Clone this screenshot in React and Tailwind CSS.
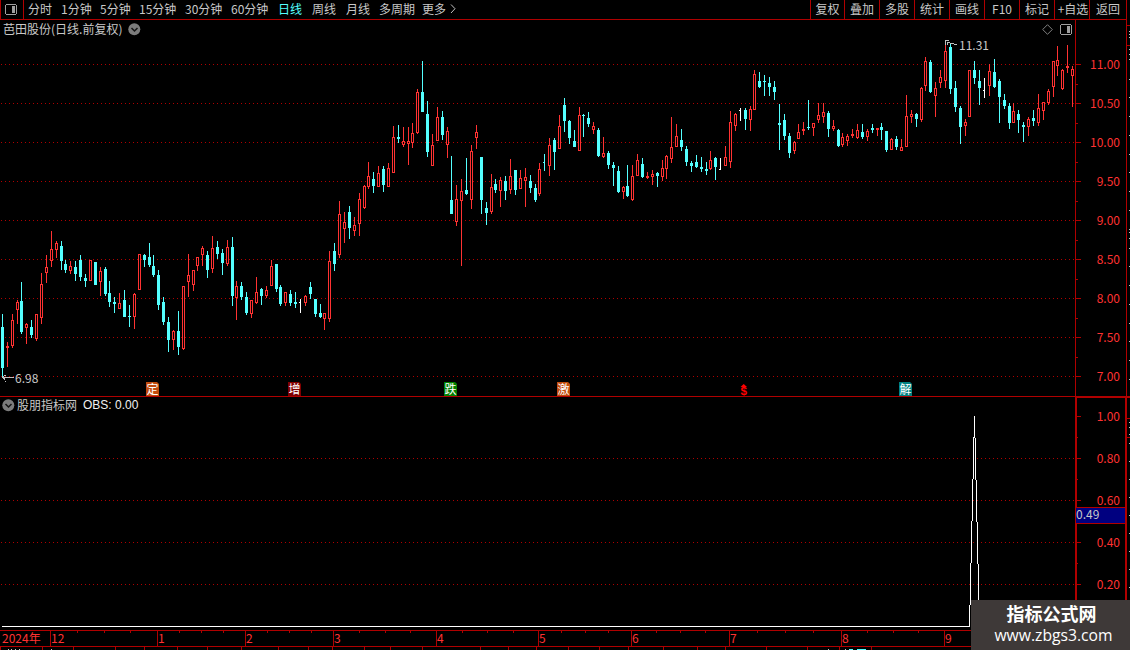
import React from "react";

// Each candle: kind (r = rise, c = fall, w = flat), x, high, body top, body bottom, low
const CANDLES = `
c 2 314 327 368 377|r 7 342 346 348 367|r 12 314 320 346 348|r 17 300 302 310 324|c 21 282 301 332 334
r 26 323 324 328 344|c 31 320 327 335 338|r 36 314 314 339 341|r 41 273 284 318 324|r 46 255 267 273 283
r 51 231 249 261 267|r 56 241 243 250 258|c 61 241 246 261 270|c 65 260 264 270 273|r 70 261 266 271 274
c 75 261 267 274 281|c 80 255 260 277 281|c 85 274 278 281 287|r 90 260 260 281 281|c 95 262 262 285 285
r 100 267 271 282 296|c 105 267 269 294 296|c 109 281 293 302 307|c 114 297 302 304 313|r 119 293 303 309 309
c 124 290 300 317 317|c 129 305 316 317 327|r 134 293 294 317 329|r 139 254 254 290 290|c 144 254 255 260 267
c 149 243 257 265 267|c 153 255 266 275 277|c 158 270 275 305 310|c 163 297 302 322 325|c 168 317 322 340 352
r 173 330 331 340 350|c 178 311 331 347 355|r 183 286 286 349 350|r 188 254 275 282 297|r 193 270 270 285 291
r 197 257 257 266 271|r 202 246 248 255 266|c 207 251 255 270 278|r 212 236 248 269 273|c 217 241 247 254 259
c 222 249 253 263 275|r 227 240 247 264 266|c 232 237 247 296 306|r 236 281 286 298 320|c 241 282 286 297 300
c 246 292 297 313 315|r 251 300 300 314 318|r 256 277 292 303 304|c 261 288 289 296 305|r 266 286 290 296 298
r 271 260 266 286 286|c 276 264 264 289 292|c 280 285 287 304 306|r 285 292 292 303 306|c 290 290 294 303 306
c 295 292 302 304 308|w 300 299 302 303 313|r 305 295 296 303 306|c 310 282 287 294 299|c 315 299 299 314 317
c 320 304 313 317 318|r 324 313 313 319 330|r 329 251 261 319 322|c 334 243 251 264 271|r 339 201 214 255 258
r 344 212 222 229 243|c 349 206 212 228 239|r 354 217 225 231 236|r 359 193 199 224 236|r 364 185 186 208 209
r 368 162 176 187 189|c 373 172 179 186 193|r 378 166 173 187 187|c 383 166 169 185 192|r 388 163 168 187 187
r 393 126 137 173 173|c 398 125 137 139 143|r 403 127 141 145 147|r 408 127 141 144 165|r 412 123 133 143 148
r 417 89 92 133 134|c 422 61 92 112 112|c 427 101 114 152 157|r 432 134 145 166 166|r 437 107 117 141 141
c 442 111 117 135 140|r 447 127 131 145 158|c 451 156 200 214 214|r 456 185 199 222 226|r 461 179 191 201 266
c 466 158 190 194 195|r 471 145 151 200 209|r 476 125 132 138 149|c 481 157 157 200 214|c 486 202 208 213 225
r 491 174 187 212 214|c 495 179 184 190 193|r 500 177 180 191 207|c 505 176 181 191 200|r 510 159 176 190 194
c 515 170 170 190 195|r 520 170 178 189 189|r 525 168 177 181 207|c 530 175 181 188 193|c 535 184 188 200 202
r 539 163 169 194 196|d 544 154 162 163 171|r 549 138 145 166 176|c 554 138 140 152 170|r 559 115 126 149 149
c 564 98 105 121 132|c 569 120 121 138 144|c 574 130 141 147 147|r 579 107 115 151 151|c 583 114 115 116 137
c 588 112 118 124 127|r 593 122 126 130 134|c 598 128 130 156 157|r 603 137 153 157 158|c 608 151 153 165 169
c 613 162 165 168 186|c 618 166 171 192 193|r 623 186 187 192 199|c 627 165 186 196 197|r 632 165 176 200 201
r 637 154 160 176 176|c 642 158 164 177 178|r 647 172 176 178 179|r 652 170 174 177 185|c 657 172 173 176 187
r 662 160 168 177 181|r 666 155 156 169 179|r 671 117 147 159 163|r 676 124 136 147 147|c 681 129 140 147 151
c 686 146 149 162 166|c 691 161 163 166 172|c 696 155 162 167 168|c 701 157 167 169 172|c 706 162 169 171 175
r 710 151 160 169 170|c 715 157 158 167 180|w 720 158 169 170 170|r 725 146 157 166 166|r 730 111 122 162 168
r 735 113 114 126 131|w 740 108 110 111 121|c 745 108 110 119 130|r 750 106 109 120 131|r 754 70 74 110 110
c 759 72 81 87 88|c 764 75 81 82 96|c 769 77 83 87 96|c 774 81 87 92 100|c 779 104 123 125 150
c 784 114 120 136 140|c 789 133 136 153 158|r 794 141 142 151 154|r 798 124 132 139 139|r 803 122 129 131 135
c 808 100 127 128 130|r 813 123 123 128 136|r 818 103 115 120 123|r 823 103 112 117 123|c 828 111 113 129 137
r 833 120 126 129 131|c 838 129 130 146 147|r 842 133 137 145 147|r 847 134 136 141 146|r 852 129 134 136 138
r 857 124 130 138 139|c 862 124 132 137 139|r 867 129 131 137 141|c 872 124 128 130 133|r 877 128 128 130 136
c 881 123 127 130 140|c 886 131 131 150 152|r 891 138 139 150 150|c 896 136 139 147 150|r 901 139 147 151 151
r 906 95 116 147 147|r 911 110 114 117 123|c 916 113 114 119 127|r 921 87 88 120 122|r 925 57 61 86 91
c 930 60 62 92 93|r 935 82 88 96 117|r 940 70 77 83 88|r 945 43 51 81 88|c 950 43 47 89 94
c 955 81 88 107 112|c 960 106 108 127 144|r 965 119 122 126 136|r 969 70 70 117 117|c 974 61 70 78 84
c 979 70 81 88 105|w 984 78 90 91 98|r 989 64 71 86 96|c 994 59 72 87 88|c 999 79 81 97 123
c 1004 94 100 106 109|c 1009 103 106 123 129|r 1013 103 111 123 123|c 1018 110 114 120 133|c 1023 122 125 127 142
r 1028 117 119 127 136|c 1033 110 118 121 126|r 1038 94 108 123 126|r 1043 102 102 111 120|r 1048 89 91 103 105
r 1053 61 61 87 97|r 1057 46 60 66 76|r 1062 69 70 89 90|r 1067 45 66 68 73|r 1072 66 69 76 107`
  .trim()
  .split(/[|\n]/)
  .map((row) => {
    const [kind, ...n] = row.trim().split(" ");
    const [x, high, top, bottom, low] = n.map(Number);
    return { kind, x, high, top, bottom, low };
  });

const COLORS = { r: "#ff3232", c: "#54ffff", w: "#ffffff", d: "#54ffff" };

function Candle({ kind, x, high, top, bottom, low }) {
  const color = COLORS[kind];
  if (kind === "w" || kind === "d") {
    return (
      <g fill={color}>
        <rect x={x} y={high} width="1" height={low - high} />
        <rect x={x - 1} y={top} width="1" height="1" />
      </g>
    );
  }
  return (
    <g fill={color}>
      <rect x={x} y={high} width="1" height={low - high} />
      <rect x={x - 1} y={top} width="3" height={bottom - top} />
      {kind === "r" && bottom - top > 2 && (
        <rect x={x} y={top + 1} width="1" height={bottom - top - 2} fill="#000" />
      )}
    </g>
  );
}

function GridLine({ y }) {
  return <line x1="1" x2="1075" y1={y + 0.5} y2={y + 0.5} stroke="#b00000" strokeDasharray="1 3" />;
}

const PERIODS = [
  ["分时", "w-[33px]"],
  ["1分钟", "w-[39px]"],
  ["5分钟", "w-[39px]"],
  ["15分钟", "w-[46px]"],
  ["30分钟", "w-[46px]"],
  ["60分钟", "w-[47px]"],
  ["日线", "w-[34px] text-[#54ffff]"],
  ["周线", "w-[34px]"],
  ["月线", "w-[33px]"],
  ["多周期", "w-[43px]"],
  ["更多", "w-[27px]"],
];

const TOOLS = [
  ["复权", "w-[34px]"],
  ["叠加", "w-[35px]"],
  ["多股", "w-[35px]"],
  ["统计", "w-[35px]"],
  ["画线", "w-[35px]"],
  ["F10", "w-[35px]"],
  ["标记", "w-[35px]"],
  ["+自选", "w-[35px] pl-[2px]"],
  ["返回", "w-[37px]"],
];

function PanelIcon({ className }) {
  return (
    <svg className={className} width="12" height="11" viewBox="0 0 12 11" shapeRendering="crispEdges">
      <path d="M1 0.5H11M1 10.5H11M0.5 1V10M11.5 1V10" stroke="#a0a0a0" fill="none" />
      <rect x="7" y="2" width="3" height="7" fill="#a0a0a0" />
    </svg>
  );
}

function DropButton() {
  return (
    <svg className="shrink-0" width="13" height="13" viewBox="0 0 13 13">
      <circle cx="6.3" cy="6.3" r="6" fill="#7c7c7c" />
      <path d="M3.5 5L6.5 8L9.5 5" stroke="#151515" strokeWidth="1.5" fill="none" />
    </svg>
  );
}

function Header() {
  return (
    <header className="flex h-5 w-[1127px] shrink-0 border-b border-[#b00000] leading-[18px] text-[#c8c8c8]">
      <div className="flex w-6 items-start border-x border-[#b00000] pt-1 pl-1">
        <PanelIcon />
      </div>
      <nav className="flex grow pl-1">
        {PERIODS.map(([label, cls]) => (
          <span key={label} className={`whitespace-nowrap ${cls}`}>{label}</span>
        ))}
        <svg className="mt-1" width="8" height="10" viewBox="0 0 8 10">
          <path d="M2 0.5L6 4.7L2 9" stroke="#c0c0c0" fill="none" />
        </svg>
      </nav>
      <div className="flex border-r border-[#b00000]">
        {TOOLS.map(([label, cls]) => (
          <span key={label} className={`border-l border-[#b00000] text-center whitespace-nowrap ${cls}`}>
            {label}
          </span>
        ))}
      </div>
    </header>
  );
}

function Badge({ x, fill, label }) {
  return (
    <g>
      <path d={`M${x} 382h11l2 2v12h-13z`} fill={fill} />
      <text x={x + 0.5} y="393.5" fill="#fff" fontSize="12">{label}</text>
    </g>
  );
}

const PRICE_TICKS = [64, 103, 142, 181, 220, 259, 298, 337, 376];
const PRICES = ["11.00", "10.50", "10.00", "9.50", "9.00", "8.50", "8.00", "7.50", "7.00"];

function PricePanel() {
  return (
    <section className="flex h-[377px] shrink-0 border-b border-[#b00000]">
      <div className="relative w-[1075px]">
        <svg className="block" width="1075" height="376" viewBox="0 20 1075 376">
          <g shapeRendering="crispEdges">
            {PRICE_TICKS.map((y) => <GridLine key={y} y={y} />)}
            {CANDLES.map((c) => <Candle key={c.x} {...c} />)}
            <path d="M2 377.5H14M3.5 376V379M4.5 378V380M5 381.5H6M4 375.5H6" stroke="#c0c0c0" fill="none" />
            <path d="M945 40.5H949M945.5 40V45M947 42.5H950M950 43.5H954M954 44.5H957M947.5 43V45" stroke="#c0c0c0" fill="none" />
          </g>
          <text x="15" y="383" fill="#c8c8c8" fontSize="12">6.98</text>
          <text x="959" y="50" fill="#c8c8c8" fontSize="12">11.31</text>
          <Badge x={146} fill="#c04a0c" label="定" />
          <Badge x={288} fill="#800000" label="增" />
          <Badge x={444} fill="#008000" label="跌" />
          <Badge x={557} fill="#c04a0c" label="激" />
          <Badge x={899} fill="#008080" label="解" />
          <path d="M740.5 387L743.7 384L747 387Z" fill="#f00" />
          <text
            className="font-['Liberation_Sans',sans-serif]"
            x="740.6"
            y="394.5"
            fill="#f00"
            fontSize="10"
            fontWeight="bold"
            textLength="6.5"
            lengthAdjust="spacingAndGlyphs"
          >
            $
          </text>
        </svg>
        <div className="absolute inset-x-0 top-0 flex h-[18px] items-center pl-[3px] text-[#c8c8c8]">
          <span className="w-[125px] leading-[18px] whitespace-nowrap">芭田股份(日线.前复权)</span>
          <DropButton />
          <span className="grow" />
          <svg className="mr-[7px]" width="11" height="11" viewBox="0 0 11 11">
            <path d="M5.5 0.7L10.3 5.5L5.5 10.3L0.7 5.5Z" stroke="#808080" fill="none" />
          </svg>
          <PanelIcon className="mr-[3px]" />
        </div>
      </div>
      <div className="flex w-[52px] border-x border-[#b00000]">
        <svg width="5" height="376" viewBox="0 20 5 376" shapeRendering="crispEdges" fill="#b00000">
          {PRICE_TICKS.map((y) => (
            <g key={y}>
              <rect x="0" y={y} width="5" height="1" />
              {y < 376 && <rect x="0" y={y + 20} width="2" height="1" />}
            </g>
          ))}
        </svg>
        <div className="grow pt-6 pr-[6px] text-right text-[#ff3232]">
          {PRICES.map((p) => <div key={p} className="h-[39px] leading-[39px]">{p}</div>)}
        </div>
      </div>
      <RightRail top={20} height={376} />
    </section>
  );
}

const RAIL_LINES = [25, 45, 397, 418, 437];
const RAIL_MARKS = [31, 34, 37, 49, 54, 59, 79, 97, 116, 135, 154, 172, 191, 210, 229, 232, 238, 248, 266, 285, 304, 323, 341, 360, 379, 422, 427, 434, 443, 461, 479, 497, 515, 533, 551, 569, 587];

function RightRail({ top, height }) {
  return (
    <svg className="shrink-0" width="3" height={height} viewBox={`0 ${top} 3 ${height}`} shapeRendering="crispEdges">
      {RAIL_LINES.map((y) => <rect key={y} x="0" y={y} width="3" height="1" fill="#b00000" />)}
      {RAIL_MARKS.map((y) => <rect key={y} x="2" y={y} width="1" height="1" fill="#c0c0c0" />)}
    </svg>
  );
}

const LEVELS = ["1.00", "0.80", "0.60", "0.40", "0.20"];
const LEVEL_TICKS = [416, 458, 500, 542, 584];

function IndicatorPanel() {
  return (
    <section className="flex h-[233px] shrink-0">
      <div className="relative w-[1075px]">
        <svg className="block" width="1075" height="233" viewBox="0 397 1075 233" shapeRendering="crispEdges">
          {LEVEL_TICKS.slice(1).map((y) => <GridLine key={y} y={y} />)}
          <path
            d="M2 626.5H969.5V605M970.5 605V563M971.5 563V521M972.5 521V479M973.5 479V437M974.5 438V416M975.5 438V480M976.5 480V522M977.5 522V564M978.5 564V606M979.5 606V627"
            stroke="#fff"
            fill="none"
          />
        </svg>
        <div className="absolute top-0 left-0 flex h-4 items-center pl-[2px] whitespace-nowrap">
          <DropButton />
          <span className="ml-[2px] w-[66px] leading-4 text-[#c8c8c8]">股朋指标网</span>
          <span className="font-['Liberation_Sans',sans-serif] leading-4 text-[#f0f0f0]">OBS: 0.00</span>
        </div>
      </div>
      <div className="relative flex w-[52px] border-x-2 border-t border-[#b00000]">
        <svg width="4" height="232" viewBox="0 398 4 232" shapeRendering="crispEdges" fill="#b00000">
          {LEVEL_TICKS.map((y) => (
            <g key={y}>
              <rect x="0" y={y} width="4" height="1" />
              <rect x="0" y={y + 21} width="1" height="1" />
            </g>
          ))}
        </svg>
        <div className="-mt-[3px] grow pr-[5px] text-right text-[#ff3232]">
          {LEVELS.map((p) => <div key={p} className="h-[42px] leading-[42px]">{p}</div>)}
        </div>
        <div className="absolute top-[109px] -left-px flex h-[17px] w-[49px] border-y border-[#b00000] bg-[#000080] leading-[12px] text-[#c8c8c8]">
          0.49
        </div>
      </div>
      <RightRail top={397} height={233} />
    </section>
  );
}

const MONTHS = [
  ["2024年", "w-[50px] pl-[2px]"],
  ["12", "w-[107px] border-l"],
  ["1", "w-[88px] border-l"],
  ["2", "w-[88px] border-l"],
  ["3", "w-[103px] border-l"],
  ["4", "w-[102px] border-l"],
  ["5", "w-[93px] border-l"],
  ["6", "w-[98px] border-l"],
  ["7", "w-[112px] border-l"],
  ["8", "w-[103px] border-l"],
  ["9", "w-[186px] border-l"],
];
const WEEK_TICKS = [77, 104, 130, 179, 201, 223, 267, 289, 311, 359, 385, 410, 462, 487, 513, 561, 585, 608, 656, 680, 705, 757, 785, 813, 867, 893, 918];
const FOOT_TICKS = [0, 42, 73, 115, 144, 177, 207, 241, 278, 308, 332, 364, 390, 422, 480, 508, 536, 568, 599, 628, 663, 697, 725, 766, 807, 839, 871];

function TimeAxis() {
  return (
    <footer className="relative flex h-5 shrink-0 flex-col">
      <div className="flex h-[17px] border-y border-[#b00000] text-[#ff3232]">
        {MONTHS.map(([label, cls]) => (
          <div key={label} className={`h-[15px] shrink-0 border-[#b00000] leading-[14px] ${cls}`}>
            {label}
          </div>
        ))}
      </div>
      <svg className="block" width="1130" height="3" viewBox="0 0 1130 3" shapeRendering="crispEdges">
        {FOOT_TICKS.map((x) => <rect key={x} x={x} y="0" width="1" height="3" fill="#b00000" />)}
        <path d="M8 2.5H9M11 2.5H12M15 2.5H16M19 2.5H20M51 2.5H52M828 2.5H829M845 2.5H846" stroke="#c0c0c0" />
        <path d="M849 2.5H853M857 2.5H866" stroke="#54ffff" />
      </svg>
      <svg className="absolute top-0 left-0" width="1130" height="3" shapeRendering="crispEdges">
        {WEEK_TICKS.map((x) => <rect key={x} x={x} y="1" width="1" height="2" fill="#b00000" />)}
      </svg>
    </footer>
  );
}

export default function App() {
  return (
    <div className="relative flex h-[650px] w-[1130px] flex-col overflow-hidden bg-black font-['Noto_Sans_CJK_SC',sans-serif] text-[12px]">
      <Header />
      <PricePanel />
      <IndicatorPanel />
      <TimeAxis />
      <div className="absolute right-0 bottom-0 flex h-[50px] w-[159px] flex-col items-center bg-[#3e3938] pt-[4px] pl-[2px] text-white">
        <div className="font-['Liberation_Sans','Noto_Sans_CJK_SC',sans-serif] text-[18px] leading-[22px] font-bold">指标公式网</div>
        <div className="pl-1 font-['Open_Sans',sans-serif] text-[15.7px] leading-[19px]">www.zbgs3.com</div>
      </div>
    </div>
  );
}
